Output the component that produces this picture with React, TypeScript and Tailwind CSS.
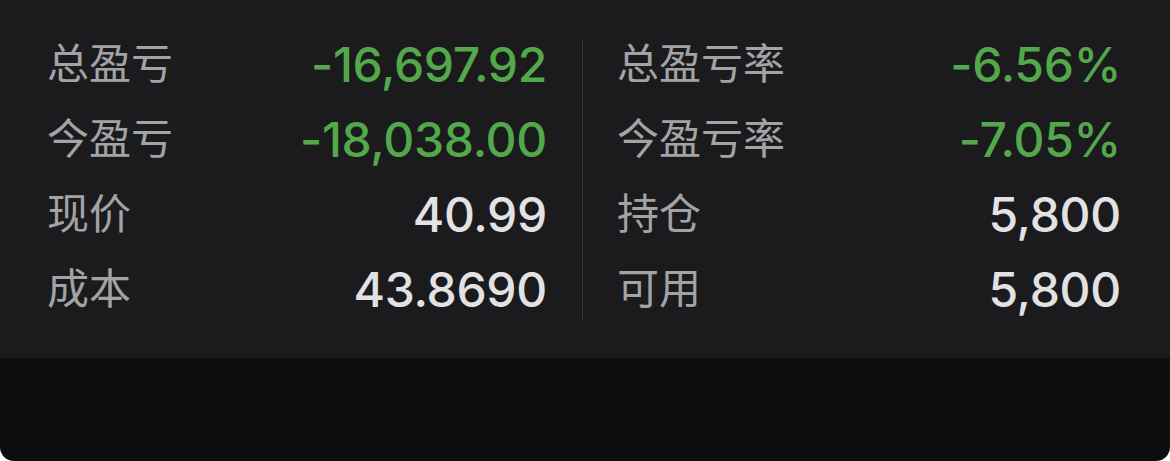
type Row = { label: string; value: string; green?: boolean };

const leftRows: Row[] = [
  { label: '总盈亏', value: '-16,697.92', green: true },
  { label: '今盈亏', value: '-18,038.00', green: true },
  { label: '现价', value: '40.99' },
  { label: '成本', value: '43.8690' },
];

const rightRows: Row[] = [
  { label: '总盈亏率', value: '-6.56%', green: true },
  { label: '今盈亏率', value: '-7.05%', green: true },
  { label: '持仓', value: '5,800' },
  { label: '可用', value: '5,800' },
];

function StatColumn({ rows, className }: { rows: Row[]; className: string }) {
  return (
    <div className={className}>
      {rows.map((row) => (
        <div key={row.label} className="h-[75px] flex items-center justify-between">
          <span className="text-[42px] text-[#a3a3a6] leading-none">{row.label}</span>
          <span
            className={`font-['Inter',sans-serif] text-[48px] font-medium leading-none tracking-[-0.3px] ${
              row.green ? 'text-[#52a84a]' : 'text-[#e2e2e4]'
            }`}
          >
            {row.value}
          </span>
        </div>
      ))}
    </div>
  );
}

export default function App() {
  return (
    <div
      className="w-[1170px] h-[461px] bg-white overflow-hidden"
      style={{ fontFamily: '"Liberation Sans", "Noto Sans CJK SC", sans-serif' }}
    >
      <div className="h-full flex flex-col rounded-b-[14px] overflow-hidden">
        <div className="h-[358px] bg-[#1b1b1d] pt-[27px] pl-[47px] pr-[49px] flex items-start">
          <StatColumn rows={leftRows} className="w-[500px] flex flex-col" />
          <div className="w-px h-[280px] mt-[13px] ml-[35px] mr-[34px] bg-[#38383a]" />
          <StatColumn rows={rightRows} className="flex-1 flex flex-col" />
        </div>
        <div className="flex-1 bg-[#0e0e10]" />
      </div>
    </div>
  );
}
